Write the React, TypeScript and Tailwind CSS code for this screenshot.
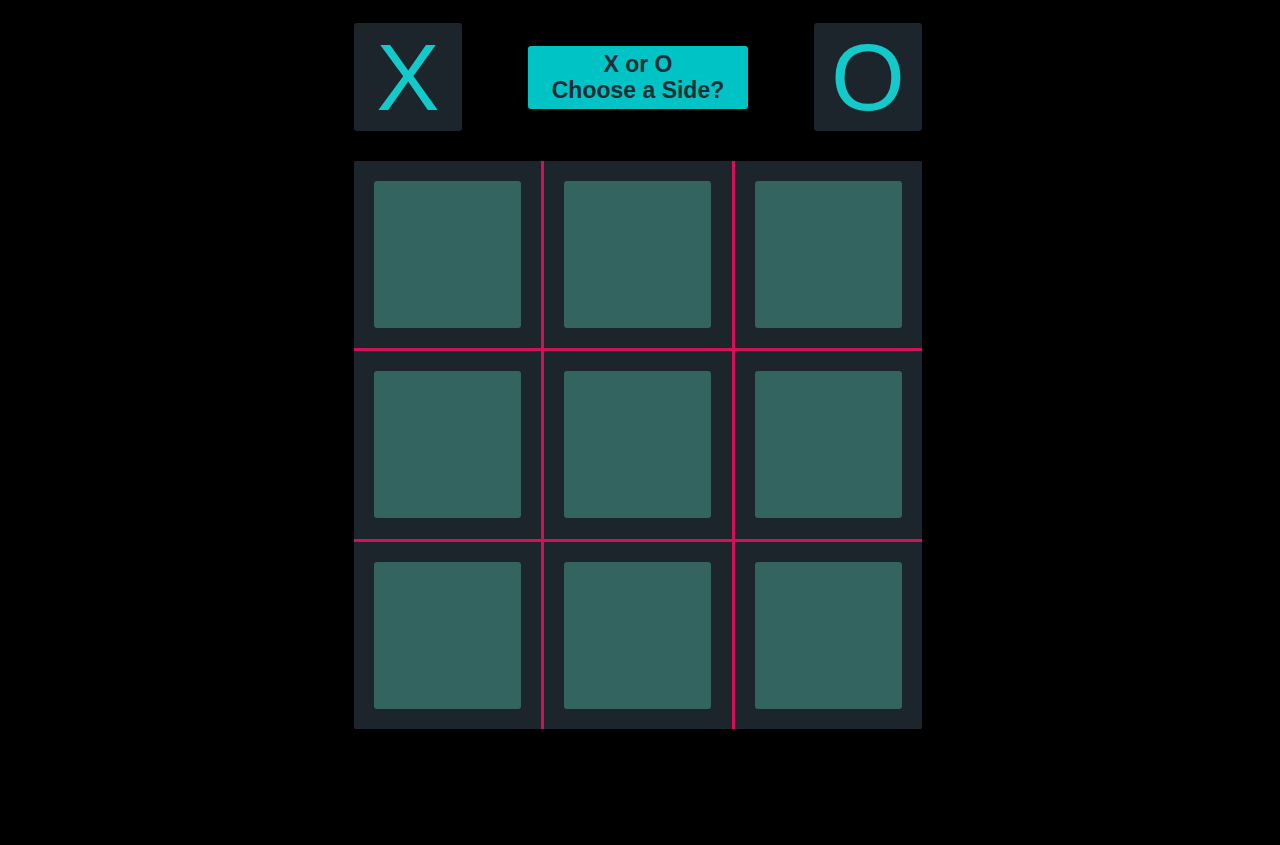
import { useState } from "react";

type Mark = "X" | "O" | null;

export default function App() {
  const [side, setSide] = useState<Mark>(null);
  const [cells, setCells] = useState<Mark[]>(Array(9).fill(null));

  const play = (i: number) => {
    if (!side || cells[i]) return;
    const next = [...cells];
    next[i] = side;
    setCells(next);
  };

  return (
    <div className="flex min-h-screen w-full justify-center bg-black pr-[4px] font-['Liberation_Sans',Arial,sans-serif]">
      <div className="w-[568px] pt-[23px]">
        {/* Side picker */}
        <div className="flex items-center justify-between">
          <button
            onClick={() => setSide("X")}
            className="flex h-[108px] w-[108px] items-center justify-center rounded-[3px] bg-[#1c242c] text-[95px] leading-none text-[#13c9c9]"
          >
            X
          </button>
          <div className="flex h-[63px] w-[220px] flex-col items-center justify-center rounded-[3px] bg-[#00c3c5] text-[23px] font-bold leading-[26px] text-[#1d2e35]">
            <span>{side ? `You are ${side}` : "X or O"}</span>
            <span>Choose a Side?</span>
          </div>
          <button
            onClick={() => setSide("O")}
            className="flex h-[108px] w-[108px] items-center justify-center rounded-[3px] bg-[#1c242c] text-[95px] leading-none text-[#13c9c9]"
          >
            O
          </button>
        </div>

        {/* Board */}
        <div className="mt-[30px] grid h-[568px] grid-cols-3 grid-rows-3 gap-[3px] overflow-hidden rounded-[3px] bg-[#d50f59]">
          {cells.map((c, i) => (
            <div key={i} className="flex items-center justify-center bg-[#1c242c]">
              <button
                onClick={() => play(i)}
                className="flex h-[147px] w-[147px] items-center justify-center rounded-[3px] bg-[#336460] text-[90px] leading-none text-[#13c9c9]"
              >
                {c}
              </button>
            </div>
          ))}
        </div>
      </div>
    </div>
  );
}
